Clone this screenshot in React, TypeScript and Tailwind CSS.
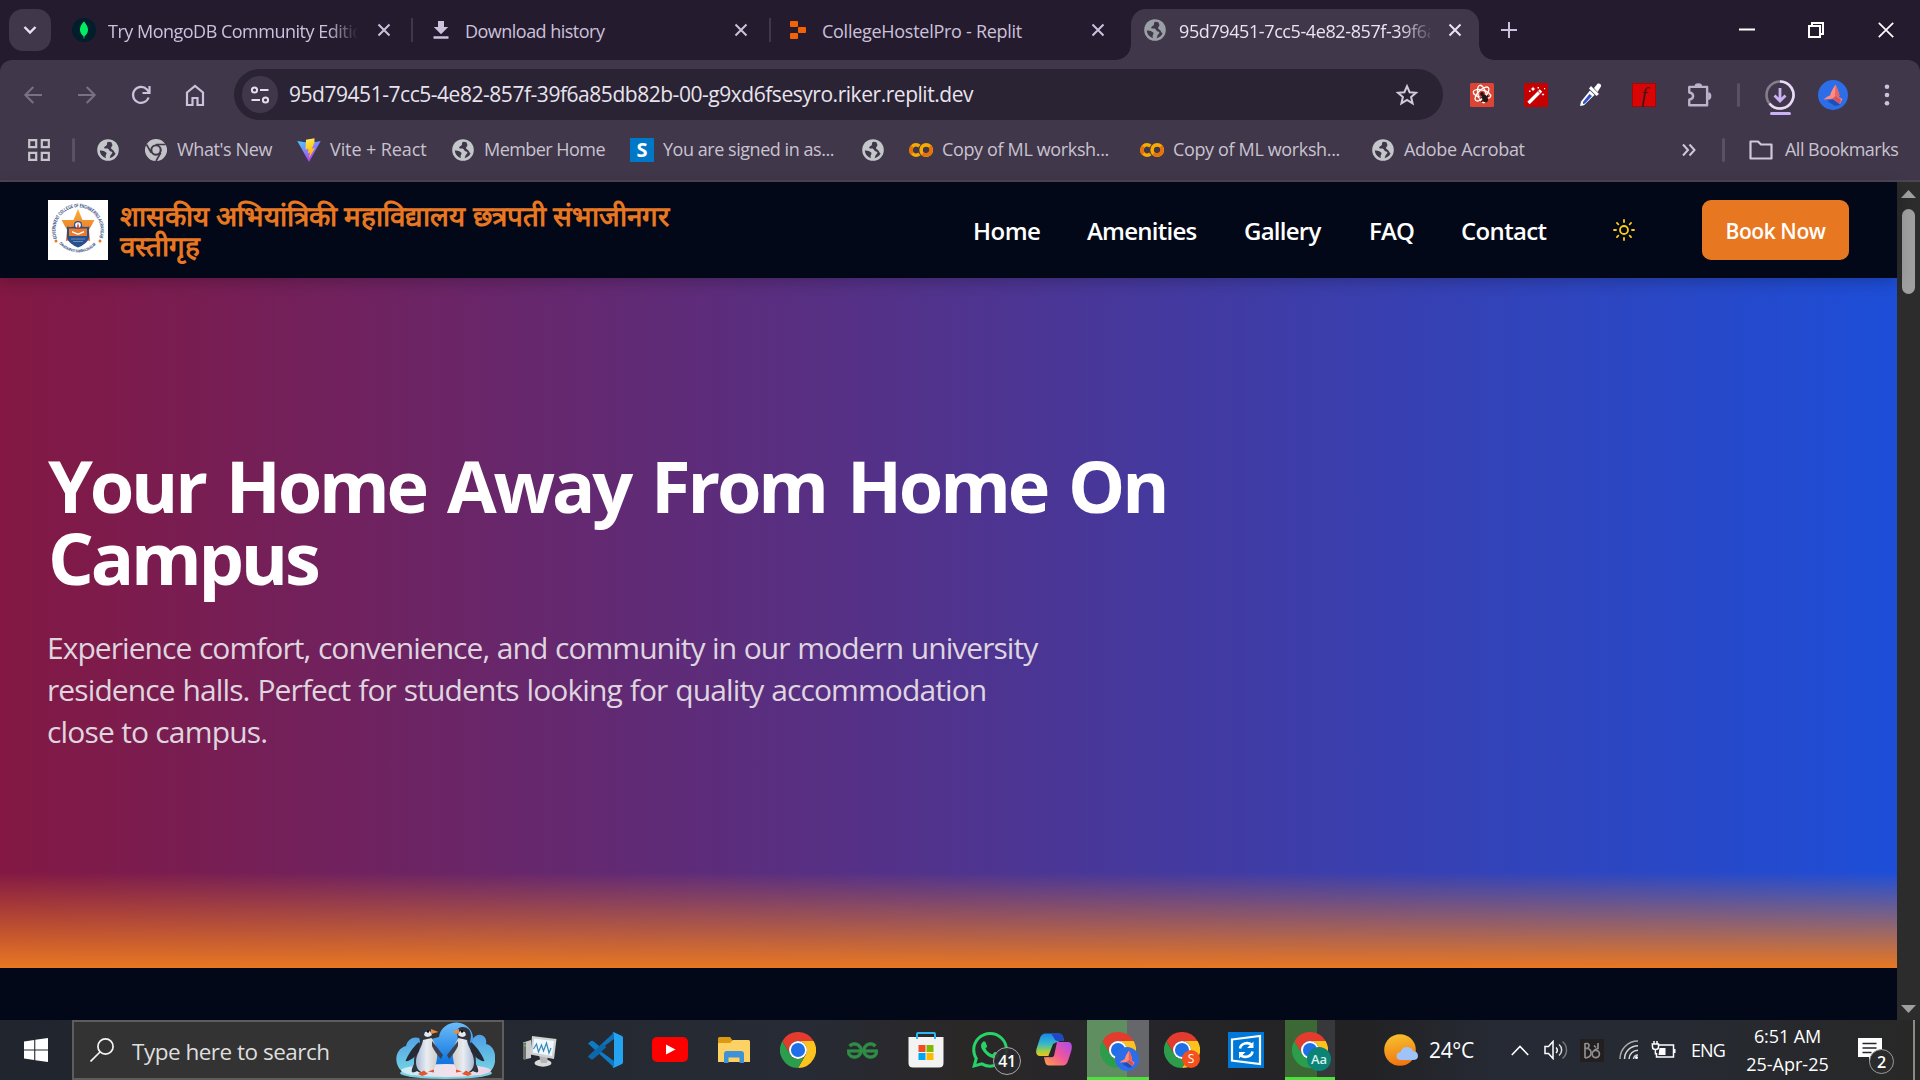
import React from "react";
import { SiGeeksforgeeks, SiWhatsapp } from "react-icons/si";
import { Sun } from "lucide-react";

type P = { className?: string };

const Globe = ({ className = "" }: P) => (
  <svg viewBox="0 0 22 22" className={"w-[22px] h-[22px] shrink-0 " + className}>
    <circle cx="11" cy="11" r="10.8" fill="currentColor" />
    <path
      d="M11.8 2.7 C9 3 10.8 5.2 9.4 6.4 C8.2 7.4 7.8 6.8 7.2 8.4 C6.7 10 9.4 9 10.6 9.6 C12.4 10.6 12 12.4 14 12.6 C16 12.8 15.6 14.6 14.2 15.4 C13 16.2 13.6 17.6 12.4 19.2 A8.4 8.4 0 0 0 18.6 14.6 C17.4 13.4 16.8 11.2 15.2 10.4 C13.6 9.8 13.8 8 15 7.2 C16.2 6.2 14.6 4.2 14.4 3.2 Z"
      className="fill-[#40374b]"
    />
    <path d="M2.8 11.6 C5 11.2 7.6 12 9.2 13.6 C10.2 14.8 8.8 15.6 8.6 17 C8.4 18.2 9 18.8 9.2 19.2 A8.4 8.4 0 0 1 2.8 11.6 Z" className="fill-[#40374b]" />
  </svg>
);

const Chrome = ({ className = "", mono = false }: P & { mono?: boolean }) => {
  const c = mono ? ["#c3c2c6", "#c3c2c6", "#c3c2c6", "#40374b", "#c3c2c6"] : ["#e33b2e", "#fcc31e", "#2c9d4b", "#ffffff", "#1f6fe8"];
  return (
    <svg viewBox="0 0 48 48" className={"shrink-0 " + className}>
      <path d="M24 12H44.8A24 24 0 0 0 3.2 12L13.6 30A12 12 0 0 1 24 12z" fill={c[0]} />
      <path d="M24 12h20.8A24 24 0 0 1 24 48L34.4 30A12 12 0 0 0 24 12z" fill={c[1]} />
      <path d="M3.2 12L13.6 30A12 12 0 0 0 34.4 30L24 48A24 24 0 0 1 3.2 12z" fill={c[2]} />
      {mono && <path d="M24 12H44.8M13.6 30L3.2 12M34.4 30L24 48" stroke="#40374b" strokeWidth="3.5" />}
      <circle cx="24" cy="24" r="12" fill={c[3]} />
      <circle cx="24" cy="24" r={mono ? 8 : 9.4} fill={c[4]} />
    </svg>
  );
};

const TabClose = ({ className = "" }: P) => (
  <svg viewBox="0 0 16 16" className={"w-4 h-4 shrink-0 " + className} fill="none" stroke="currentColor" strokeWidth="2">
    <path d="M2.5 2.5l11 11M13.5 2.5l-11 11" />
  </svg>
);

const Colab = ({ className = "" }: P) => (
  <svg viewBox="0 0 24 16" className={"w-6 h-4 shrink-0 " + className} fill="none" strokeWidth="3.6">
    <circle cx="17.2" cy="8" r="5.1" stroke="#f9ab00" />
    <path d="M20.8 4.4A5.1 5.1 0 0 1 13.6 11.6" stroke="#e8710a" />
    <path d="M10.4 4.2A5.1 5.1 0 1 0 10.4 11.8" stroke="#f9ab00" />
    <path d="M3.4 11.6A5.1 5.1 0 0 1 3.4 4.4" stroke="#e8710a" />
  </svg>
);

const Bird = ({ className = "" }: P) => (
  <svg viewBox="0 0 30 30" className={"shrink-0 " + className}>
    <circle cx="15" cy="15" r="15" fill="#2d6ee8" />
    <path d="M9 21L16 19L22 25L17 26z" fill="#1d4fb8" />
    <path d="M17.500 4.500C15.500 8 13 11 12 15.500L19 19L21.500 15.500C20.500 11 19 8 17.500 4.500z" fill="#ff8d80" />
    <path d="M17.500 4.500L17 16L19 19L21.500 15.500C20.500 11 19 8 17.500 4.500z" fill="#e8645c" />
    <path d="M5.500 19.500C9 16.500 12 15 15.500 14.500L24.500 19L22 24L14.500 18.800z" fill="#ff8a7c" />
    <path d="M14.500 18.500L18 15.800L23 19.500L22 24z" fill="#d9525a" />
  </svg>
);

const Sep = ({ className = "" }: P) => <div className={"w-[3px] h-6 rounded-full bg-[#5a5165] shrink-0 " + className} />;

function TabStrip() {
  return (
    <div className="flex items-center h-[60px] bg-[#241c2e] text-[#cdc1dc] text-[18px] shrink-0">
      <div className="ml-[9px] w-[42px] h-[42px] rounded-[14px] bg-[#40374b] flex items-center justify-center shrink-0">
        <svg viewBox="0 0 14 10" className="w-[14px] h-[10px]" fill="none" stroke="#e9e2f0" strokeWidth="2.4"><path d="M1.500 2L7 7.500L12.500 2" /></svg>
      </div>
      <svg viewBox="0 0 24 24" className="w-6 h-6 ml-[21px] shrink-0">
        <circle cx="12" cy="12" r="12" fill="#001e2b" />
        <path d="M12 3.500C8.500 7 7.800 10 8 12.500C8.200 15 10 17 11.500 18.200L11.700 20.500H12.300L12.500 18.200C14.300 16.800 15.900 15 16 12C16.100 9 14.500 6.500 12 3.500z" fill="#00ed64" />
      </svg>
      <div className="ml-3 pt-[3px] w-[250px] overflow-hidden whitespace-nowrap tracking-[-0.502px] [mask-image:linear-gradient(to_right,black_88%,transparent)]">Try MongoDB Community Edition</div>
      <TabClose className="ml-[18px]" />
      <div className="ml-[19px] w-[2px] h-6 bg-[#40374b]" />
      <svg viewBox="0 0 24 24" className="w-6 h-6 ml-4 shrink-0" fill="#cdc1dc"><path d="M9 3h6v6h4.200L12 16.200L4.800 9H9zM4.500 18.300h15v2.400h-15z" /></svg>
      <div className="ml-3 pt-[3px] w-[260px] whitespace-nowrap tracking-[-0.52px]">Download history</div>
      <TabClose className="ml-2" />
      <div className="ml-5 w-[2px] h-6 bg-[#40374b]" />
      <svg viewBox="0 0 24 24" className="w-6 h-6 ml-[15px] shrink-0" fill="#f26207">
        <rect x="4" y="3" width="8" height="6" rx="1" /><rect x="12" y="9" width="8" height="6" rx="1" /><rect x="4" y="15" width="8" height="6" rx="1" />
      </svg>
      <div className="ml-3 pt-[3px] w-[260px] whitespace-nowrap tracking-[-0.276px]">CollegeHostelPro - Replit</div>
      <TabClose className="ml-2" />
      <div className="ml-[25px] relative w-[348px] h-[51px] self-end rounded-t-[15px] bg-[#40374b] flex items-center pb-[9px] text-[#e9e4f0] shrink-0">
        <div className="absolute bottom-0 -left-[15px] w-[15px] h-[15px] bg-[radial-gradient(circle_at_0_0,transparent_14.5px,#40374b_15px)]" />
        <div className="absolute bottom-0 -right-[15px] w-[15px] h-[15px] bg-[radial-gradient(circle_at_100%_0,transparent_14.5px,#40374b_15px)]" />
        <Globe className="ml-[13px] text-[#9aa0a6]" />
        <div className="ml-[13px] pt-[3px] w-[251px] overflow-hidden whitespace-nowrap tracking-[-0.4px] [mask-image:linear-gradient(to_right,black_88%,transparent_102%)]">95d79451-7cc5-4e82-857f-39f6a85db82b</div>
        <TabClose className="ml-[17px]" />
      </div>
      <svg viewBox="0 0 18 18" className="w-[18px] h-[18px] ml-[21px] shrink-0" stroke="#cdc1dc" strokeWidth="2"><path d="M9 1v16M1 9h16" /></svg>
      <svg viewBox="0 0 16 16" className="w-4 h-4 ml-[221px] shrink-0" fill="#fff"><rect x="0" y="6.500" width="16" height="2" /></svg>
      <svg viewBox="0 0 16 16" className="w-4 h-4 ml-[53px] shrink-0" fill="none" stroke="#fff" strokeWidth="2"><path d="M1 4h11v11H1zM4 4V1h11v11h-3" /></svg>
      <svg viewBox="0 0 16 16" className="w-4 h-4 ml-[54px] shrink-0" fill="none" stroke="#fff" strokeWidth="1.7"><path d="M.8 .8l14.400 14.400M15.200 .8L.8 15.200" /></svg>
    </div>
  );
}

function Toolbar() {
  return (
    <div className="flex items-center h-[69px] text-[#cdc1dc]">
      <svg viewBox="0 0 24 24" className="w-6 h-6 ml-[21px] shrink-0" fill="none" stroke="#7b7186" strokeWidth="2"><path d="M21 12H4.500M12.300 4L4.300 12l8 8" /></svg>
      <svg viewBox="0 0 24 24" className="w-6 h-6 ml-[30px] shrink-0" fill="none" stroke="#7b7186" strokeWidth="2"><path d="M3 12h16.500M11.700 4l8 8l-8 8" /></svg>
      <svg viewBox="0 0 24 24" className="w-6 h-6 ml-[30px] shrink-0" fill="none" stroke="currentColor" strokeWidth="2.200"><path d="M19.600 14.500A8 8 0 1 1 18 6.500L20 9" /><path d="M20.500 3v7h-7" /></svg>
      <svg viewBox="0 0 24 24" className="w-6 h-6 ml-[30px] shrink-0" fill="none" stroke="currentColor" strokeWidth="2.200"><path d="M4 9.500L12 3l8 6.500V22h-5.500v-7h-5v7H4z" /></svg>
      <div className="ml-[27px] w-[1209px] h-[51px] rounded-full bg-[#2a2333] flex items-center shrink-0">
        <div className="ml-2 w-9 h-[37px] rounded-full bg-[#40374b] flex items-center justify-center">
          <svg viewBox="0 0 20 20" className="w-5 h-5" fill="none" stroke="#e6e0ec" strokeWidth="2"><circle cx="4.500" cy="5" r="2.600" /><path d="M10 5h8.500M1.500 15H10" /><circle cx="15.500" cy="15" r="2.600" /></svg>
        </div>
        <div className="ml-[11px] pt-px text-[21px] text-[#e8e3ee] whitespace-nowrap tracking-[-0.463px]">95d79451-7cc5-4e82-857f-39f6a85db82b-00-g9xd6fsesyro.riker.replit.dev</div>
        <svg viewBox="0 0 24 24" className="w-6 h-6 ml-auto mr-6" fill="none" stroke="#d2cbd9" strokeWidth="2"><path d="M12 3.200L14.600 9.200L21 9.800L16.100 14L17.600 20.400L12 17L6.400 20.400L7.900 14L3 9.800L9.400 9.200z" /></svg>
      </div>
      <svg viewBox="0 0 24 24" className="w-6 h-6 ml-[27px] shrink-0">
        <rect width="24" height="24" rx="1.500" fill="#dc4433" />
        <g fill="none" stroke="#fff" strokeWidth="1.300"><ellipse cx="12" cy="11" rx="9" ry="4" transform="rotate(15 12 11)" /><ellipse cx="12" cy="11" rx="9" ry="4" transform="rotate(75 12 11)" /><ellipse cx="12" cy="11" rx="9" ry="4" transform="rotate(135 12 11)" /></g>
        <ellipse cx="15" cy="15.500" rx="2.700" ry="4" transform="rotate(-25 15 15.500)" fill="#261512" /><circle cx="12" cy="11" r="1.900" fill="#261512" />
        <path d="M9.500 15l9-1.500M11 19l7-6.500" stroke="#261512" strokeWidth="1.200" />
      </svg>
      <svg viewBox="0 0 24 24" className="w-6 h-6 ml-[30px] shrink-0">
        <rect width="24" height="24" rx="1.500" fill="#c40000" />
        <path d="M4.500 20L17 7.500" stroke="#fff" strokeWidth="3.400" /><path d="M14.200 8.500l1.600 1.600" stroke="#c40000" strokeWidth="1" />
        <path d="M9 3.500l.8 1.700l1.700.8l-1.700.8L9 8.500l-.8-1.700L6.500 6l1.700-.8zM19 10l.5 1l1 .5l-1 .5l-.5 1l-.5-1l-1-.5l1-.5zM5 7.500h1.500v1.500H5zM13.500 4H15v1.500h-1.500zM20 5h1.200v1.200H20z" fill="#fff" />
      </svg>
      <svg viewBox="0 0 24 24" className="w-6 h-6 ml-[30px] shrink-0">
        <path d="M12 7.500L3 18.500L2 23L6 22.300L16.500 12z" fill="#fff" /><path d="M11.500 11L5 19v2l2-.5L14 13z" fill="#2f4fd0" />
        <path d="M13 3L21 11l-2.500 2L11 5.500z" fill="#fff" /><path d="M16 5l3.500-4.200c2-1.300 4.500.8 3.300 3L19.500 9z" fill="#fff" />
      </svg>
      <div className="w-6 h-6 ml-[30px] shrink-0 bg-[#d90404] border border-[#a80606] flex items-center justify-center font-['Liberation_Serif',serif] italic text-[22px] leading-none text-[#43191c]">f</div>
      <svg viewBox="0 0 24 24" className="w-[26px] h-[26px] ml-[30px] shrink-0 overflow-visible" fill="none" stroke="#bdb2ca" strokeWidth="2.200"><path d="M3 4.500h16.500v17H3v-5.200c2.200-.3 3.600-1.500 3.600-3.300S5.200 10 3 9.700z" strokeLinejoin="round" /><path d="M9 4a2.400 1.800 0 0 1 4.800 0M20.500 10.600a1.800 2.400 0 0 1 0 4.800" fill="#bdb2ca" /></svg>
      <Sep className="ml-[25px]" />
      <div className="relative ml-[25px] w-[30px] h-[30px] shrink-0">
        <svg viewBox="0 0 30 30" className="w-[30px] h-[30px]" fill="none" strokeWidth="2.600">
          <circle cx="15" cy="15" r="13.500" stroke="#857c8c" /><path d="M15 1.500A13.500 13.500 0 1 1 4.500 23.500" stroke="#ead9f8" />
          <path d="M15 8v13M9.500 15.500L15 21l5.500-5.500" stroke="#cbb2f5" strokeWidth="2.800" />
        </svg>
        <div className="absolute left-[5px] top-[32px] w-[21px] h-[3px] rounded-full bg-[#cbb2f5]" />
      </div>
      <Bird className="w-[30px] h-[30px] ml-[23px]" />
      <svg viewBox="0 0 6 22" className="w-[6px] h-[22px] ml-9 shrink-0" fill="#cdc1dc"><circle cx="3" cy="2.800" r="2.300" /><circle cx="3" cy="11" r="2.300" /><circle cx="3" cy="19.200" r="2.300" /></svg>
    </div>
  );
}

function Bookmarks() {
  return (
    <div className="flex items-center h-[41px] mb-[10px] text-[18px] text-[#c9c3cf] whitespace-nowrap">
      <svg viewBox="0 0 22 22" className="w-[22px] h-[22px] ml-7 shrink-0" fill="none" stroke="#c7c5c9" strokeWidth="2.200"><path d="M1.200 1.200h7v7h-7zM13.800 1.200h7v7h-7zM1.200 13.800h7v7h-7zM13.800 13.800h7v7h-7z" /></svg>
      <Sep className="ml-[22px]" />
      <Globe className="ml-[22px] text-[#c3c7ca]" />
      <Chrome mono className="w-[22px] h-[22px] ml-[26px]" />
      <div className="ml-[10px] w-[95px] tracking-[-0.389px]">What's New</div>
      <svg viewBox="0 0 24 24" className="w-6 h-6 ml-[25px] shrink-0">
        <defs>
          <linearGradient id="va" x1="0" y1="0" x2=".6" y2="1"><stop offset="0" stopColor="#41d1ff" /><stop offset="1" stopColor="#bd34fe" /></linearGradient>
          <linearGradient id="vb" x1=".4" y1="0" x2=".6" y2="1"><stop offset="0" stopColor="#ffea83" /><stop offset=".2" stopColor="#ffdd35" /><stop offset="1" stopColor="#ffa800" /></linearGradient>
        </defs>
        <path d="M.3 3L12 24L23.700 3L13 5z" fill="url(#va)" />
        <path d="M17.500 .2L9 1.800L8.500 11.500l3-.6l-.8 4.300l2.300-.6L11.700 20.500L18 10l-3.200.7L17.500 4.500z" fill="url(#vb)" />
      </svg>
      <div className="ml-[9px] w-[97px] tracking-[-0.1px]">Vite + React</div>
      <Globe className="ml-[25px] text-[#c3c7ca]" />
      <div className="ml-[10px] w-[121px] tracking-[-0.55px]">Member Home</div>
      <div className="ml-[25px] w-6 h-6 shrink-0 bg-[#0078c8] text-white font-bold text-[20px] leading-none flex items-center justify-center">S</div>
      <div className="ml-[9px] w-[171px] tracking-[-0.457px]">You are signed in as...</div>
      <Globe className="ml-7 text-[#c3c7ca]" />
      <Colab className="ml-[25px]" />
      <div className="ml-[9px] w-[168px] tracking-[-0.36px]">Copy of ML worksh...</div>
      <Colab className="ml-[30px]" />
      <div className="ml-[9px] w-[168px] tracking-[-0.36px]">Copy of ML worksh...</div>
      <Globe className="ml-[31px] text-[#c3c7ca]" />
      <div className="ml-[10px] w-[121px] tracking-[-0.3px]">Adobe Acrobat</div>
      <svg viewBox="0 0 14 14" className="w-[14px] h-[14px] ml-[157px] shrink-0" fill="none" stroke="#cfc8d6" strokeWidth="2"><path d="M1 1.500L6 7l-5 5.500M7.500 1.500L12.500 7l-5 5.500" /></svg>
      <Sep className="ml-[26px]" />
      <svg viewBox="0 0 24 20" className="w-6 h-5 ml-6 shrink-0" fill="none" stroke="#cfc8d6" strokeWidth="2.200" strokeLinejoin="round"><path d="M1.500 1.500H9l3 3h10.500v14h-21z" /></svg>
      <div className="ml-3 tracking-[-0.52px]">All Bookmarks</div>
    </div>
  );
}

const CollegeLogo = () => (
  <svg viewBox="0 0 60 60" className="w-[60px] h-[60px] ml-12 shrink-0 bg-white">
    <defs>
      <path id="ringTop" d="M9 38.500A22.500 23 0 1 1 51 38.500" />
      <path id="ringBottom" d="M11 43.500A24 23 0 0 0 49 43.500" />
      <linearGradient id="star" x1="0" y1="0" x2="0" y2="1"><stop offset="0" stopColor="#f9b233" /><stop offset="1" stopColor="#e5602a" /></linearGradient>
    </defs>
    <text fontSize="5" fontWeight="bold" fill="#1f3f7a" fontFamily="Liberation Sans, sans-serif"><textPath href="#ringTop" textLength="92" lengthAdjust="spacingAndGlyphs">GOVERNMENT COLLEGE OF ENGINEERING AURANGABAD</textPath></text>
    <text fontSize="4.200" fontWeight="bold" fill="#1f3f7a" fontFamily="Liberation Sans, sans-serif"><textPath href="#ringBottom" textLength="42" lengthAdjust="spacingAndGlyphs">CHHATRAPATI SAMBHAJINAGAR</textPath></text>
    <circle cx="8" cy="41" r="1.500" fill="#e87722" /><circle cx="52" cy="41" r="1.500" fill="#e87722" />
    <path d="M30 9L34.500 20H46.500L41 30L42 41L30 38L18 41L19 30L13.500 20H25.500z" fill="url(#star)" />
    <path d="M19 26.500Q25 28 30 25Q35 28 41 26.500V38Q39 44 30 47.500Q21 44 19 38z" fill="#27508f" />
    <path d="M21 28.500H39V36H21z" fill="#ea7a2c" /><path d="M24 31L30 33.500L36 31V32.500L30 35L24 32.500z" fill="#fff" />
    <circle cx="30" cy="25" r="4" fill="#2b4f8f" /><circle cx="30" cy="25" r="2.800" fill="#fff" /><path d="M30 22.500l1.500 6h-3z" fill="#e04a2c" />
    <path d="M23 39h14M25 41.500h10" stroke="#7f9cc8" strokeWidth=".8" />
  </svg>
);

function SiteHeader() {
  return (
    <header className="relative z-10 flex items-center h-24 w-[1897px] bg-[#020817] shrink-0 shadow-[0_4px_14px_rgba(0,0,0,0.22)] text-[24px] font-semibold whitespace-nowrap">
      <CollegeLogo />
      <div className="ml-3 w-[853px] text-[27.8px] leading-[30px] text-[#e87722] font-bold font-['Open_Sans',sans-serif]">
        <div>शासकीय अभियांत्रिकी महाविद्यालय छत्रपती संभाजीनगर</div>
        <div>वस्तीगृह</div>
      </div>
      <div className="w-[114px] pt-[2px] tracking-[-0.5px]">Home</div>
      <div className="w-[157px] pt-[2px] tracking-[-0.75px]">Amenities</div>
      <div className="w-[125px] pt-[2px] tracking-[-0.75px]">Gallery</div>
      <div className="w-[92px] pt-[2px] tracking-[-0.8px]">FAQ</div>
      <div className="w-[151px] pt-[2px] tracking-[-0.65px]">Contact</div>
      <Sun size={24} strokeWidth={1.8} className="text-[#facc15] shrink-0" />
      <div className="ml-[66px] w-[147px] h-[60px] pt-[3px] rounded-[9px] bg-[#e87722] text-[21px] tracking-[-0.42px] flex items-center justify-center">Book Now</div>
    </header>
  );
}

function Hero() {
  return (
    <section className="h-[690px] w-[1897px] bg-[linear-gradient(to_right,#831843,#1d4ed8)] flex flex-col shrink-0">
      <h1 className="mt-[171px] ml-[48px] text-[72px] leading-[72px] font-bold tracking-[-3.2px] [word-spacing:5.6px] whitespace-nowrap">Your Home Away From Home On<br />Campus</h1>
      <p className="mt-[34px] ml-[47px] text-[30px] leading-[42px] text-[#dfd5df] whitespace-nowrap">
        <span className="tracking-[-0.96px] [word-spacing:0.8px]">Experience comfort, convenience, and community in our modern university</span><br />
        <span className="tracking-[-0.9px] [word-spacing:1px]">residence halls. Perfect for students looking for quality accommodation</span><br />
        <span className="tracking-[-0.8px]">close to campus.</span>
      </p>
      <div className="mt-auto h-24 bg-linear-to-t from-[#e87722] to-[#e87722]/0" />
    </section>
  );
}

const Penguins = () => (
  <svg viewBox="0 0 99 57" className="w-[99px] h-[57px] ml-auto mr-[7px] shrink-0">
    <defs>
      <linearGradient id="cloud" x1="0" y1="0" x2="0" y2="1"><stop offset="0" stopColor="#6cbcf9" /><stop offset=".85" stopColor="#1378e0" /></linearGradient>
      <linearGradient id="cloudSide" x1="0" y1="0" x2="0" y2="1"><stop offset="0" stopColor="#4f9fe6" /><stop offset="1" stopColor="#74d4e4" /></linearGradient>
      <linearGradient id="ice" x1="0" x2="1"><stop offset="0" stopColor="#c9ecf6" /><stop offset=".6" stopColor="#f7dfe9" /><stop offset="1" stopColor="#e9d3e6" /></linearGradient>
      <linearGradient id="belly" x1="0" x2="1"><stop offset="0" stopColor="#a9bbd6" /><stop offset=".5" stopColor="#e9ecf2" /><stop offset="1" stopColor="#cfcdc8" /></linearGradient>
    </defs>
    <path d="M8 51C-3 44 -2 27 10 24C12 16 20 13 26 18H76C82 8 92 14 90 22C102 24 102 46 92 51z" fill="url(#cloudSide)" />
    <path d="M31 46V18L43 15C44 5 54 0 61 .5C70 1 77 8 77 16L74 46z" fill="url(#cloud)" />
    <ellipse cx="50" cy="51" rx="46" ry="6" fill="#7dd0e2" />
    <ellipse cx="50" cy="48.500" rx="45" ry="6.500" fill="url(#ice)" />
    <g id="pen">
      <path d="M23 14C23 7 28 4.500 32 5C36 5.500 37 8 37 11L36 18C43 26 42 39 37 47C33 52 24 52 21 49C14 53 15 48 18 42C18 34 19 26 24 20z" fill="#30343f" />
      <path d="M27 18L35.500 16C40 23 42 28 41 36C40 45 37 50 30 51C23 51 20 46 20 40C20 31 26 26 27 18z" fill="url(#belly)" />
      <path d="M23 20C16 26 12 33 9.500 39C12 40 19 36 23 29z" fill="#252a36" />
      <path d="M36 19L47 33L45 37C41 33 38 28 36 24z" fill="#3a4152" />
      <path d="M28 13Q31 17 36 13L34 9L29 10z" fill="#e3e9ef" />
      <circle cx="32" cy="9.500" r="1.200" fill="#0b0d12" />
      <path d="M35 7L42.500 10L35 12z" fill="#f08a3c" />
      <path d="M22 52l6-3.500l4 3.500l-6 2zM32 49.500l6-2v3z" fill="#e4572e" />
    </g>
    <use href="#pen" transform="translate(98 0) scale(-1 1)" />
  </svg>
);

function Taskbar() {
  return (
    <div className="relative flex items-center h-[60px] bg-[linear-gradient(to_right,#20252e_0%,#242830_25%,#272b35_42%,#2a2727_50%,#26262a_60%,#222224_71%,#262a34_78%,#262a33_86%,#282827_100%)] whitespace-nowrap shrink-0">
      <svg viewBox="0 0 24 24" className="w-6 h-6 ml-6 shrink-0" fill="#fff"><path d="M0 3.400L10.200 2v9.500H0zM11.300 1.800L24 0v11.500H11.300zM0 12.500h10.200V22L0 20.600zM11.300 12.500H24V24L11.300 22.200z" /></svg>
      <div className="ml-6 w-[432px] h-[60px] border-2 border-[#5d5d5d] bg-[#333333] flex items-center shrink-0">
        <svg viewBox="0 0 24 24" className="w-6 h-6 ml-4 shrink-0" fill="none" stroke="#f4f4f4" strokeWidth="1.700"><circle cx="15.500" cy="8.500" r="7.600" /><path d="M10 14L.5 23.500" /></svg>
        <div className="ml-[18px] pt-[3px] text-[22.5px] tracking-[-0.5px] text-[#dedede]">Type here to search</div>
        <Penguins />
      </div>
      <svg viewBox="0 0 36 36" className="w-9 h-9 ml-[18px] shrink-0">
        <path d="M1 10.500L9 8V26L2 27.500L1 26z" fill="#c9c9c9" /><path d="M1 11l3-.6V27l-2 .5l-1-1.500z" fill="#6d6f70" /><circle cx="2.800" cy="13.500" r="1" fill="#58d13a" />
        <ellipse cx="21" cy="31" rx="8.500" ry="3.700" fill="#d9d9d9" /><path d="M17 23h9l-1 8h-6z" fill="#b5b5b5" />
        <path d="M10 4L34.500 7L32 27L8.500 22.500z" fill="#cfd1d2" /><path d="M12 6.500L32 9L30 24L10.800 20.500z" fill="#eef8fd" />
        <path d="M11.500 17l3-5l2 8l3-7l2 6l3-8l2.500 10l2-5" fill="none" stroke="#3987b8" strokeWidth="1.200" />
      </svg>
      <svg viewBox="0 0 36 36" className="w-9 h-9 ml-[29px] shrink-0">
        <path d="M1 11.500L4 9Q5 8.500 6 9L27 26V35.500z" fill="#0f7bc4" /><path d="M1 24.500L4 27Q5 27.500 6 27L27 10V.5z" fill="#1071b8" />
        <path d="M27 .3L35 4Q36 4.500 36 6V30Q36 31.500 35 32L27 35.700Q26 36 25.500 35L27 34V2L25.500 1Q26 0 27 .3z" fill="#24a3f1" />
        <path d="M12 18L27 7V29z" fill="#282c35" /><path d="M1 24.500L15 12L19.500 15L6 27Q5 27.500 4 27z" fill="#0c68ad" />
      </svg>
      <svg viewBox="0 0 36 26" className="w-9 h-[26px] ml-[29px] shrink-0"><rect width="36" height="25" rx="5" fill="#ff0000" /><path d="M14 7.500L23.500 12.500L14 17.500z" fill="#fff" /></svg>
      <svg viewBox="0 0 36 28" className="w-9 h-7 ml-7 shrink-0">
        <path d="M2 2.500Q2 1 3.500 1H14L17 5H32V10H2z" fill="#dc9a12" /><path d="M2 7H14L17 4H32.500Q34 4 34 5.500V26H2z" fill="#fcd265" />
        <path d="M8 27V18Q8 15 11 15H25Q28 15 28 18V27H23.500V21.500H12.500V27z" fill="#3e92d8" />
      </svg>
      <Chrome className="w-9 h-9 ml-7" />
      <div className="w-9 ml-7 shrink-0 flex justify-center text-[#2f8d46]"><SiGeeksforgeeks size={31} className="stroke-[#2f8d46]" strokeWidth={0.5} /></div>
      <svg viewBox="0 0 36 36" className="w-9 h-9 ml-7 shrink-0">
        <path d="M.5 5H35.500V31Q35.500 35.500 31 35.500H5Q.5 35.500 .5 31z" fill="#f3f3f3" />
        <path d="M9 7V2Q9 1 10 1H26Q27 1 27 2V7" fill="none" stroke="#2cb7f2" strokeWidth="2" />
        <path d="M10.500 13h7v7h-7z" fill="#f04e22" /><path d="M18.500 13h7v7h-7z" fill="#7fba00" /><path d="M10.500 21h7v7h-7z" fill="#00a4ef" /><path d="M18.500 21h7v7h-7z" fill="#ffb900" />
      </svg>
      <div className="relative w-9 h-9 ml-7 shrink-0 text-[#25d366]">
        <SiWhatsapp size={36} />
        <div className="absolute left-[21px] top-[15px] w-7 h-7 rounded-full border border-[#aaa] bg-[#2a2a2d]/90 text-white font-semibold text-[16px] tracking-[-0.5px] leading-none flex items-center justify-center">41</div>
      </div>
      <svg viewBox="0 0 36 36" className="w-9 h-9 ml-7 shrink-0">
        <defs>
          <linearGradient id="ca" x1="0" y1="0" x2="0" y2="1"><stop offset="0" stopColor="#1a86ee" /><stop offset=".45" stopColor="#33b8c8" /><stop offset=".8" stopColor="#a5d040" /><stop offset="1" stopColor="#f2c21f" /></linearGradient>
          <linearGradient id="cb" x1="1" y1="0" x2="0" y2="1"><stop offset="0" stopColor="#a94df0" /><stop offset=".5" stopColor="#f0569a" /><stop offset="1" stopColor="#fba441" /></linearGradient>
        </defs>
        <path d="M16 1.500H23Q26 1.500 27 5L28 9Q22 8 20.500 12L17 24H4Q-1 24 .5 17L4 6Q5.500 1.500 9.500 1.500z" fill="url(#ca)" />
        <path d="M15 1.500H23Q26 1.500 27 5L28 9H22Q18.500 9 17.500 5z" fill="#2048c4" />
        <path d="M20 33.500H13Q10 33.500 9 30L8 25Q14 26 15.500 22L19 10H32Q37 10 35.500 18L32 29Q30.500 33.500 26.500 33.500z" fill="url(#cb)" />
        <path d="M17 12L21 10L18 24Q16.500 26 12 25z" fill="#26262a" />
      </svg>
      <div className="relative w-[62px] h-[60px] ml-[15px] shrink-0 bg-[linear-gradient(to_right,#5f8f60_64.5%,#66676b_64.5%)] border-b-[3px] border-[#4ee13c]">
        <Chrome className="w-9 h-9 mt-3 ml-[13px]" />
        <Bird className="absolute left-[28px] top-[27px] w-6 h-6" />
      </div>
      <div className="relative w-9 h-9 ml-[15px] shrink-0">
        <Chrome className="w-9 h-9" />
        <div className="absolute left-[18px] top-[18px] w-[18px] h-[18px] rounded-full bg-[#f4511e] text-[12px] leading-none flex items-center justify-center">S</div>
      </div>
      <svg viewBox="0 0 36 36" className="w-9 h-9 ml-7 shrink-0">
        <rect width="36" height="36" fill="#0078d7" /><path d="M4 7.500L32 4V32L4 28.500z" fill="none" stroke="#fff" strokeWidth="2.200" />
        <path d="M12 16.500A7 6 0 0 1 24 13M24.500 19.500A7 6 0 0 1 12.500 23" fill="none" stroke="#fff" strokeWidth="2.600" /><path d="M25.500 9.500V16H19zM11 26.500V20H17.500z" fill="#fff" />
      </svg>
      <div className="relative w-[50px] h-[60px] ml-[21px] shrink-0 bg-[linear-gradient(to_right,#3c6836_64%,#37383c_64%)] border-b-[3px] border-[#4ee13c]">
        <Chrome className="w-9 h-9 mt-3 ml-[7px]" />
        <div className="absolute left-[22px] top-[27px] w-6 h-6 rounded-full bg-[#0b8376] text-[#d8f0ec] text-[13px] font-semibold leading-none flex items-center justify-center">Aa</div>
      </div>
      <svg viewBox="0 0 36 36" className="w-9 h-9 ml-12 shrink-0">
        <defs><linearGradient id="sun" x1=".3" y1="0" x2=".5" y2="1"><stop offset="0" stopColor="#f6c22e" /><stop offset="1" stopColor="#f2730f" /></linearGradient></defs>
        <circle cx="17" cy="18" r="15.800" fill="url(#sun)" />
        <path d="M18 28Q13.500 28 13.500 24Q13.500 20.500 17.500 20Q19 14.500 24.500 15Q29 15.500 30 19Q35 19.500 35 24Q35 28 30 28z" fill="#9fc2f8" />
      </svg>
      <div className="ml-[10px] w-[45px] text-[21px] tracking-[-0.35px] pt-[2px]">24°C</div>
      <svg viewBox="0 0 18 11" className="w-[18px] h-[11px] ml-[37px] shrink-0" fill="none" stroke="#fff" strokeWidth="1.600"><path d="M.8 10L9 1.500L17.200 10" /></svg>
      <svg viewBox="0 0 24 20" className="w-6 h-5 ml-[15px] shrink-0" fill="none" stroke="#fff" strokeWidth="1.500"><path d="M1 6.500h3.500L9 1.500v17L4.500 13.500H1z" /><path d="M12 7.500a3.500 3.500 0 0 1 0 5.500" /><path d="M15 4.500a7 7 0 0 1 0 11" stroke="#ddd" /><path d="M18.500 1.500a11 11 0 0 1 0 17" stroke="#777" /></svg>
      <svg viewBox="0 0 24 23" className="ml-3 w-6 h-[23px] shrink-0 bg-[#231e1f]" fill="none" stroke="#8f8f8f" strokeWidth="1.700"><path d="M5 4v15M5 4.500h2.500q3 1 .5 4.500l-3 .5h2.500q4 1 3.500 5t-6 4.500" /><circle cx="15.800" cy="15" r="3.600" /><path d="M14 11l4-1.500V4M14 6.500l2 2" /></svg>
      <svg viewBox="0 0 20 20" className="w-5 h-5 ml-[15px] shrink-0" fill="none" stroke="#d6d6d6" strokeWidth="1.500"><path d="M1 19A18 18 0 0 1 19 1" stroke="#aaa" /><path d="M5.500 19A13.500 13.500 0 0 1 19 5.700M10 19A9 9 0 0 1 19 10.300M14.500 19A4.500 4.500 0 0 1 19 15" /><circle cx="17.500" cy="17.500" r="1.500" fill="#fff" stroke="none" /></svg>
      <svg viewBox="0 0 26 20" className="w-[26px] h-5 ml-3 shrink-0" fill="none" stroke="#fff" strokeWidth="1.500"><path d="M8 5h14.500v12H5.500v-4" /><path d="M23.500 9v4" strokeWidth="2" /><path d="M8.500 8h6v7H7.500z" fill="#fff" stroke="none" /><path d="M3 1v3M6 1v3M1.300 4h6.200v3q0 2.500-3 2.500q-3 0-3-2.500zM4.400 9.500v5" /></svg>
      <div className="ml-[14px] w-[36px] text-[18px] tracking-[-0.885px]">ENG</div>
      <div className="ml-[19px] w-[83px] text-[18px] leading-[28px] text-center h-14 pb-1 self-start mt-[2px]">
        <div className="tracking-[-0.1px]">6:51 AM</div><div>25-Apr-25</div>
      </div>
      <div className="relative ml-[28px] w-[38px] h-[60px] shrink-0">
        <svg viewBox="0 0 26 26" className="w-[26px] h-[26px] mt-[18px]"><path d="M1 0H25V19H17L12 24V19H1z" fill="#fff" /><path d="M5.500 5.500h14M5.500 10h14M5.500 14.500h9" stroke="#26272a" strokeWidth="1.500" /></svg>
        <div className="absolute left-[12px] top-[29px] w-[25px] h-[25px] rounded-full border border-[#9a9a9a] bg-[#2b2b2c] font-semibold text-[16px] leading-none flex items-center justify-center">2</div>
      </div>
      <div className="ml-[18px] w-[2px] h-[60px] bg-[#8a8a8a]" />
    </div>
  );
}

export default function App() {
  return (
    <div className="w-[1920px] h-[1080px] overflow-hidden flex flex-col bg-[#020817] text-white font-['Open_Sans','Noto_Sans',sans-serif]">
      <TabStrip />
      <div className="bg-[#241c2e] shrink-0">
        <div className="bg-[#40374b] rounded-t-[12px] h-[122px] border-b-2 border-[#4c4553]">
          <Toolbar />
          <Bookmarks />
        </div>
      </div>
      <div className="flex h-[838px] shrink-0">
        <div className="w-[1897px] flex flex-col">
          <SiteHeader />
          <Hero />
        </div>
        <div className="w-[23px] bg-[#2c2c2c] flex flex-col items-center">
          <svg viewBox="0 0 15 8" className="w-[15px] h-2 mt-[8px]" fill="#9f9f9f"><path d="M7.500 0L15 8H0z" /></svg>
          <div className="mt-[11px] w-[13px] h-[85px] rounded-full bg-[#9f9f9f]" />
          <svg viewBox="0 0 15 8" className="w-[15px] h-2 mt-auto mb-[7px]" fill="#9f9f9f"><path d="M7.500 8L15 0H0z" /></svg>
        </div>
      </div>
      <Taskbar />
    </div>
  );
}
